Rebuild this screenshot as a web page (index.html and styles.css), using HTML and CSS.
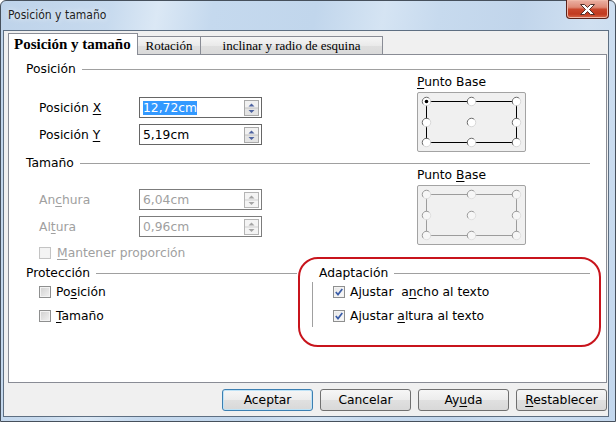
FILE: index.html
```html
<!DOCTYPE html>
<html lang="es">
<head>
  <meta charset="UTF-8">
  <title>Posición y tamaño</title>
  <link rel="stylesheet" href="styles.css">
</head>
<body>
  <div class="window">
    <div class="titlebar">
      <span class="title">Posición y tamaño</span>
      <div class="close-btn">
        <svg width="41" height="18" viewBox="0 0 41 18">
          <path d="M13.5 4.5h4l3 3 3-3h4l-5 5 5 5h-4l-3-3-3 3h-4l5-5z" fill="#fff" stroke="#50302a"/>
        </svg>
      </div>
    </div>

    <div class="client">
      <div class="tabs">
        <div class="tab active">Posición y tamaño</div>
        <div class="tab tab-rot">Rotación</div>
        <div class="tab tab-incl">inclinar y radio de esquina</div>
      </div>

      <div class="panel">
        <!-- Posicion -->
        <div class="group-title"><span>Posición</span><i class="rule"></i></div>
        <div class="group-body pos">
          <div class="fields">
            <div class="field">
              <label>Posición <u>X</u></label>
              <div class="spin">
                <span class="value"><span class="sel">12,72cm</span></span>
                <svg class="spin-btn" width="15" height="16" viewBox="0 0 15 16">
                  <rect x="0.5" y="0.5" width="14" height="15" fill="#f1f1f1" stroke="#a9a9a9"/>
                  <rect x="1" y="8" width="13" height="7" fill="#e4e4e4"/>
                  <line x1="1" y1="8" x2="14" y2="8" stroke="#c2c2c2"/>
                  <path d="M7.5 3.5l3 3h-6z" fill="#4e63a0"/>
                  <path d="M7.5 13l3-3h-6z" fill="#4e63a0"/>
                </svg>
              </div>
            </div>
            <div class="field">
              <label>Posición <u>Y</u></label>
              <div class="spin">
                <span class="value">5,19cm</span>
                <svg class="spin-btn" width="15" height="16" viewBox="0 0 15 16">
                  <rect x="0.5" y="0.5" width="14" height="15" fill="#f1f1f1" stroke="#a9a9a9"/>
                  <rect x="1" y="8" width="13" height="7" fill="#e4e4e4"/>
                  <line x1="1" y1="8" x2="14" y2="8" stroke="#c2c2c2"/>
                  <path d="M7.5 3.5l3 3h-6z" fill="#4e63a0"/>
                  <path d="M7.5 13l3-3h-6z" fill="#4e63a0"/>
                </svg>
              </div>
            </div>
          </div>
          <div class="base">
            <div class="base-label"><u>P</u>unto Base</div>
            <div class="base-box">
              <svg width="107" height="58" viewBox="0 0 107 58">
                <defs>
                  <g id="rad-on">
                    <circle r="4" fill="#fff"/>
                    <path d="M-3 3A4.2 4.2 0 0 1 3-3" fill="none" stroke="#6a6a6a"/>
                    <path d="M3-3A4.2 4.2 0 0 1-3 3" fill="none" stroke="#d8d8d8"/>
                  </g>
                </defs>
                <path d="M8.5 8.5H98.5V49.5H8.5Z" fill="none" stroke="#000"/>
                <use href="#rad-on" x="8.5" y="8.5"/>
                <use href="#rad-on" x="53.5" y="8.5"/>
                <use href="#rad-on" x="98.5" y="8.5"/>
                <use href="#rad-on" x="8.5" y="29.5"/>
                <use href="#rad-on" x="53.5" y="29.5"/>
                <use href="#rad-on" x="98.5" y="29.5"/>
                <use href="#rad-on" x="8.5" y="49.5"/>
                <use href="#rad-on" x="53.5" y="49.5"/>
                <use href="#rad-on" x="98.5" y="49.5"/>
                <circle cx="8.5" cy="8.5" r="1.8" fill="#000"/>
              </svg>
            </div>
          </div>
        </div>

        <!-- Tamano -->
        <div class="group-title size-title"><span>Tamaño</span><i class="rule"></i></div>
        <div class="group-body size">
          <div class="fields">
            <div class="field disabled">
              <label>An<u>c</u>hura</label>
              <div class="spin">
                <span class="value">6,04cm</span>
                <svg class="spin-btn" width="15" height="16" viewBox="0 0 15 16">
                  <rect x="0.5" y="0.5" width="14" height="15" fill="#f4f4f4" stroke="#b4b4b4"/>
                  <line x1="1" y1="8" x2="14" y2="8" stroke="#cfcfcf"/>
                  <path d="M7.5 3.5l3 3h-6z" fill="#a4a4a4"/>
                  <path d="M7.5 13l3-3h-6z" fill="#a4a4a4"/>
                </svg>
              </div>
            </div>
            <div class="field disabled">
              <label>Al<u>t</u>ura</label>
              <div class="spin">
                <span class="value">0,96cm</span>
                <svg class="spin-btn" width="15" height="16" viewBox="0 0 15 16">
                  <rect x="0.5" y="0.5" width="14" height="15" fill="#f4f4f4" stroke="#b4b4b4"/>
                  <line x1="1" y1="8" x2="14" y2="8" stroke="#cfcfcf"/>
                  <path d="M7.5 3.5l3 3h-6z" fill="#a4a4a4"/>
                  <path d="M7.5 13l3-3h-6z" fill="#a4a4a4"/>
                </svg>
              </div>
            </div>
            <div class="check-row keep disabled">
              <span class="cb"></span>
              <span><u>M</u>antener proporción</span>
            </div>
          </div>
          <div class="base">
            <div class="base-label">Punto <u>B</u>ase</div>
            <div class="base-box">
              <svg width="107" height="58" viewBox="0 0 107 58">
                <defs>
                  <g id="rad-off">
                    <circle r="4" fill="#f6f6f6"/>
                    <path d="M-3 3A4.2 4.2 0 0 1 3-3" fill="none" stroke="#9a9a9a"/>
                    <path d="M3-3A4.2 4.2 0 0 1-3 3" fill="none" stroke="#e0e0e0"/>
                  </g>
                </defs>
                <path d="M8.5 8.5H98.5V49.5H8.5Z" fill="none" stroke="#9c9c9c"/>
                <use href="#rad-off" x="8.5" y="8.5"/>
                <use href="#rad-off" x="53.5" y="8.5"/>
                <use href="#rad-off" x="98.5" y="8.5"/>
                <use href="#rad-off" x="8.5" y="29.5"/>
                <use href="#rad-off" x="53.5" y="29.5"/>
                <use href="#rad-off" x="98.5" y="29.5"/>
                <use href="#rad-off" x="8.5" y="49.5"/>
                <use href="#rad-off" x="53.5" y="49.5"/>
                <use href="#rad-off" x="98.5" y="49.5"/>
              </svg>
            </div>
          </div>
        </div>

        <!-- Proteccion / Adaptacion -->
        <div class="bottom">
          <div class="group prot">
            <div class="group-title"><span>Protección</span><i class="rule"></i></div>
            <div class="checks">
              <div class="check-row"><span class="cb"></span><span>Po<u>s</u>ición</span></div>
              <div class="check-row"><span class="cb"></span><span><u>T</u>amaño</span></div>
            </div>
          </div>
          <div class="group adapt">
            <div class="group-title"><span>Adaptación</span><i class="rule"></i></div>
            <div class="checks">
              <div class="check-row">
                <span class="cb checked"><svg width="10" height="10" viewBox="0 0 10 10"><path d="M1.8 5l2.2 2.6L8.3 2" fill="none" stroke="#3a5da8" stroke-width="1.7"/></svg></span>
                <span>Ajustar&nbsp; a<u>n</u>cho al texto</span>
              </div>
              <div class="check-row">
                <span class="cb checked"><svg width="10" height="10" viewBox="0 0 10 10"><path d="M1.8 5l2.2 2.6L8.3 2" fill="none" stroke="#3a5da8" stroke-width="1.7"/></svg></span>
                <span>Ajustar <u>a</u>ltura al texto</span>
              </div>
            </div>
          </div>
        </div>

        <div class="annot"></div>
      </div>

      <div class="buttons">
        <button class="default">Aceptar</button>
        <button>Cancelar</button>
        <button>Ay<u>u</u>da</button>
        <button><u>R</u>establecer</button>
      </div>
    </div>
  </div>
</body>
</html>
```

FILE: styles.css
```css
* { box-sizing: border-box; }
body {
  margin: 0; width: 616px; height: 422px; overflow: hidden;
  background: #fff;
  font-family: "DejaVu Sans", sans-serif; font-size: 12.3px; color: #000;
}
u { text-underline-offset: 2px; }

.window {
  width: 616px; height: 422px;
  border: 1px solid #46505c; border-radius: 6px 6px 0 0;
  padding: 0 6px 4px 2px;
  display: flex; flex-direction: column;
  background: linear-gradient(100deg, #bed3ea 0%, #c7daee 16%, #dbe8f5 23%, #c5d9ee 31%, #c1d6ec 46%,
    #d5e4f3 56%, #c7daee 64%, #c1d5eb 76%, #d0e0f1 86%, #c3d7ed 100%);
}
.titlebar { height: 29px; display: flex; align-items: flex-start; }
.title {
  font-family: "DejaVu Sans Condensed", "DejaVu Sans", sans-serif; font-stretch: condensed;
  font-size: 12px; line-height: 14px; color: #1e1e1e;
  margin: 7px 0 0 5px;
  text-shadow: 0 0 6px #fff;
}
.close-btn {
  margin: -1px 0 0 auto; width: 43px; height: 19px;
  border: 1px solid #5a2219; border-top: none; border-radius: 0 0 4px 4px;
  background: linear-gradient(#eab1a4 0%, #df8a76 40%, #c9472d 52%, #c13a1f 78%, #d8694a 100%);
  box-shadow: inset 0 0 0 1px #f0b8a8;
}
.close-btn svg { display: block; }

.client {
  flex: 1;
  border: 1px solid #5e6f82;
  background: #f0f0f0;
  padding: 0 1px 0 4px;
}

/* tabs */
.tabs { display: flex; align-items: flex-end; height: 24px; }
.tab {
  border: 1px solid #898c95; border-bottom: none;
  font-family: "Liberation Serif", serif;
}
.tab.active {
  width: 130px; height: 22px; padding-left: 5px;
  background: #fff; position: relative; z-index: 1;
  font-weight: bold; font-size: 15px; line-height: 20px;
}
.tab-rot, .tab-incl {
  height: 19px; text-align: center;
  font-size: 13px; line-height: 18px;
  background: linear-gradient(#f6f6f6, #e9e9e9 50%, #dfdfdf 51%, #d9d9d9);
  border-left: none;
}
.tab-rot { width: 63px; }
.tab-incl { width: 182px; }

.panel {
  position: relative;
  margin-top: -1px; height: 329px;
  border: 1px solid #898c95; background: #fff;
  padding: 7px 16px 0 17px;
}

.group-title { display: flex; align-items: center; height: 14px; line-height: 14px; white-space: nowrap; }
.rule { flex: 1; height: 1px; background: #a0a0a0; margin-left: 6px; }
.size-title { margin-top: 4px; }

.group-body { display: flex; }
.fields { width: 391px; padding-left: 13px; display: flex; flex-direction: column; gap: 6px; }
.pos .fields { padding-top: 21px; }
.size .fields { padding-top: 19px; }

.field { display: flex; align-items: center; height: 21px; }
.field label { width: 100px; }
.spin {
  width: 123px; height: 21px;
  border: 1px solid #666; background: #fff;
  display: flex; align-items: center;
  padding: 0 2px 0 3px;
}
.value { flex: 1; }
.sel { background: #3399ff; color: #fff; }
.spin-btn { display: block; }

.disabled { color: #a0a0a0; }
.disabled .spin { border-color: #7c7c7c; }

.base-label { line-height: 14px; margin-top: -1px; }
.size .base-label { margin-top: -2px; }
.base-box {
  width: 109px; height: 60px; margin-top: 3px;
  border: 1px solid #a3a3a3; border-radius: 2px;
  background: #f0f0f0;
}
.base-box svg { display: block; }

.check-row { display: flex; align-items: center; gap: 5px; height: 16px; }
.keep { margin-top: 2px; gap: 6px; }
.cb {
  width: 12px; height: 12px; flex: none;
  border: 1px solid #8e8f8f;
  background: linear-gradient(135deg, #cfcfcf, #f2f2f2);
  box-shadow: inset 0 0 0 1px #f3f3f3;
}
.cb.checked { background: linear-gradient(135deg, #e6e6e6, #fbfbfb); }
.cb svg { display: block; margin: 0; }
.keep .cb { border-color: #c4c4c4; background: #f4f4f4; }

/* proteccion / adaptacion */
.bottom {
  display: grid; grid-template-columns: 271px 278px; column-gap: 15px;
  margin-top: 5px;
}
.checks { display: flex; flex-direction: column; gap: 8px; }
.prot .checks { margin-top: 4px; padding-left: 13px; }
.adapt .group-title { padding-left: 7px; }
.adapt .checks {
  margin-top: 2px; padding: 2px 0 3px 20px;
  border-left: 1px solid #a0a0a0;
}

.annot {
  position: absolute; left: 289px; top: 202px;
  width: 303px; height: 90px;
  border: 2px solid #c8141c; border-radius: 20px;
}

/* buttons */
.buttons { display: flex; justify-content: flex-end; gap: 7px; margin-top: 6px; }
.buttons button {
  width: 91px; height: 22px; padding: 0;
  font: inherit; color: #000;
  border: 1px solid #707070; border-radius: 3px;
  background: linear-gradient(#f6f6f6, #ececec 50%, #e0e0e0 51%, #d8d8d8);
}
.buttons button.default { border-color: #3c7fb1; box-shadow: inset 0 0 0 1px #bfe3f7; }
```
